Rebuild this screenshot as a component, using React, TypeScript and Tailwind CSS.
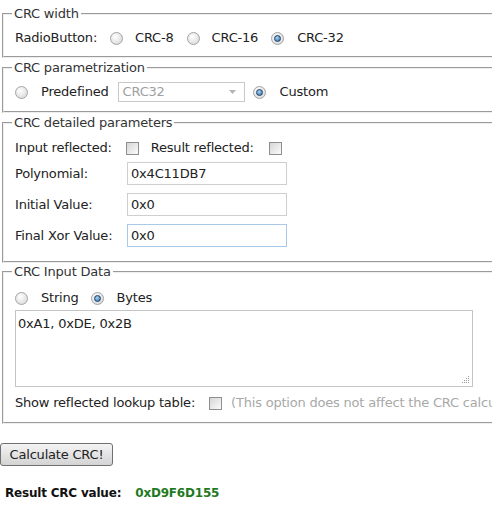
import React from 'react'

const Radio = ({ checked = false, className = '' }: { checked?: boolean; className?: string }) => (
  <span
    className={`inline-flex size-[13px] shrink-0 items-center justify-center rounded-full border border-[#a4a4a4] bg-[radial-gradient(circle_at_40%_35%,#ffffff,#d2d2d2)] ${className}`}
  >
    {checked && (
      <span className="size-[7px] rounded-full border border-[#1d3f63] bg-[radial-gradient(circle_at_40%_35%,#a8d4f2,#2c6aa6)]" />
    )}
  </span>
)

const Check = ({ className = '' }: { className?: string }) => (
  <span
    className={`inline-block size-[13px] shrink-0 border border-[#8e8e8e] bg-linear-to-br from-[#d6d6d6] to-[#fbfbfb] ${className}`}
  />
)

const Legend = ({ children }: { children: React.ReactNode }) => (
  <legend className="-ml-[3px] px-[2px] text-[13px] leading-[16px] text-[#333]">{children}</legend>
)

const fs = 'w-[540px] border-2 border-[#eeeeee] [border-style:groove] pl-[11px]'

const TextField = ({ value, focused = false }: { value: string; focused?: boolean }) => (
  <input
    readOnly
    value={value}
    className={`h-[23px] w-[160px] border px-[3px] text-[13px] tracking-[-0.2px] text-[#222] outline-none ${
      focused ? 'border-[#a9c9e8]' : 'border-[#cfcfcf]'
    }`}
  />
)

export default function App() {
  return (
    <div className="w-[492px] h-[508px] overflow-hidden bg-white font-['DejaVu_Sans',Verdana,sans-serif] text-[13px] tracking-[-0.2px] text-[#222]">
      <div className="flex flex-col pl-[2px] pt-[6px]">
        <fieldset className={`${fs} pt-[6px] pb-[8px]`}>
          <Legend>CRC width</Legend>
          <div className="flex h-[20px] items-center">
            <span>RadioButton:</span>
            <Radio className="ml-[13px]" />
            <span className="ml-[12px]">CRC-8</span>
            <Radio className="ml-[13px]" />
            <span className="ml-[12px]">CRC-16</span>
            <Radio checked className="ml-[13px]" />
            <span className="ml-[13px]">CRC-32</span>
          </div>
        </fieldset>

        <fieldset className={`${fs} mt-[2px] pt-[5px] pb-[8px]`}>
          <Legend>CRC parametrization</Legend>
          <div className="flex h-[22px] items-center">
            <Radio />
            <span className="ml-[13px]">Predefined</span>
            <div className="ml-[9px] flex h-[20px] w-[127px] items-center justify-between border border-[#c9c9c9] pl-[4px] pr-[8px] text-[#a0a0a0]">
              <span>CRC32</span>
              <svg width="7" height="4" viewBox="0 0 7 4">
                <path d="M0 0 L7 0 L3.5 4 Z" fill="#b4b4b4" />
              </svg>
            </div>
            <Radio checked className="ml-[8px]" />
            <span className="ml-[14px]">Custom</span>
          </div>
        </fieldset>

        <fieldset className={`${fs} mt-[2px] pt-[7px] pb-[14px]`}>
          <Legend>CRC detailed parameters</Legend>
          <div className="flex h-[20px] items-center">
            <span>Input reflected:</span>
            <Check className="ml-[14px]" />
            <span className="ml-[12px]">Result reflected:</span>
            <Check className="ml-[15px]" />
          </div>
          <div className="mt-[4px] flex items-center">
            <span className="w-[112px]">Polynomial:</span>
            <TextField value="0x4C11DB7" />
          </div>
          <div className="mt-[8px] flex items-center">
            <span className="w-[112px]">Initial Value:</span>
            <TextField value="0x0" />
          </div>
          <div className="mt-[8px] flex items-center">
            <span className="w-[112px]">Final Xor Value:</span>
            <TextField value="0x0" focused />
          </div>
        </fieldset>

        <fieldset className={`${fs} mt-[1px] pt-[8px] pb-[9px]`}>
          <Legend>CRC Input Data</Legend>
          <div className="flex h-[20px] items-center">
            <Radio />
            <span className="ml-[13px]">String</span>
            <Radio checked className="ml-[12px]" />
            <span className="ml-[13px]">Bytes</span>
          </div>
          <div className="relative mt-[2px] h-[77px] w-[458px]">
            <textarea
              readOnly
              value="0xA1, 0xDE, 0x2B"
              className="block h-full w-full resize-none border border-[#c4c4c4] px-[2px] py-[5px] text-[13px] leading-[16px] tracking-[-0.2px] text-[#222] outline-none"
            />
            <svg className="absolute bottom-[3px] right-[3px]" width="8" height="8" viewBox="0 0 8 8">
              <g fill="#9a9a9a">
                <rect x="6" y="0" width="1" height="1" />
                <rect x="4" y="2" width="1" height="1" />
                <rect x="6" y="2" width="1" height="1" />
                <rect x="2" y="4" width="1" height="1" />
                <rect x="4" y="4" width="1" height="1" />
                <rect x="6" y="4" width="1" height="1" />
                <rect x="0" y="6" width="1" height="1" />
                <rect x="2" y="6" width="1" height="1" />
                <rect x="4" y="6" width="1" height="1" />
                <rect x="6" y="6" width="1" height="1" />
              </g>
            </svg>
          </div>
          <div className="mt-[6px] flex h-[20px] items-center whitespace-nowrap">
            <span>Show reflected lookup table:</span>
            <Check className="ml-[14px]" />
            <span className="ml-[9px] text-[#a8a8a8]">(This option does not affect the CRC calculation)</span>
          </div>
        </fieldset>
      </div>

      <button className="mt-[19px] h-[23px] w-[113px] rounded-[3px] border border-[#707070] bg-linear-to-b from-[#f4f4f4] to-[#d4d4d4] text-[13px] text-[#222]">
        Calculate CRC!
      </button>

      <div className="mt-[19px] flex h-[16px] items-center pl-[5px] text-[12px] font-bold">
        <span className="text-[#111]">Result CRC value:</span>
        <span className="ml-[14px] text-[#1f7a1f]">0xD9F6D155</span>
      </div>
    </div>
  )
}
